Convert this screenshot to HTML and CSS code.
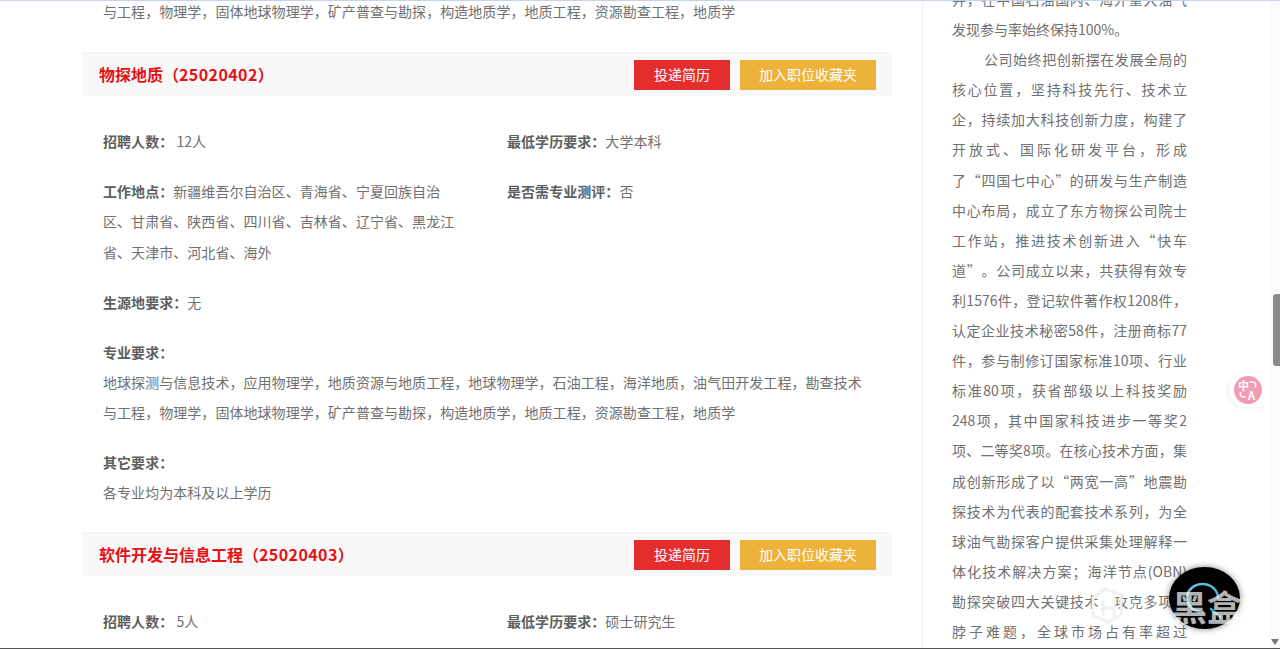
FILE: index.html
```html
<!DOCTYPE html>
<html lang="zh-CN">
  <head>
    <meta charset="UTF-8" />
    <meta name="viewport" content="width=device-width, initial-scale=1.0" />
    <title>招聘职位</title>
    <link rel="stylesheet" href="styles.css">
  </head>
  <body>
    <div class="page">
      <div class="main">
        <p class="tail-text">与工程，物理学，固体地球物理学，矿产普查与勘探，构造地质学，地质工程，资源勘查工程，地质学</p>

        <div class="job-header">
          <h2 class="job-title">物探地质（<span class="job-code">25020402</span>）</h2>
          <div class="job-buttons">
            <a class="btn btn-apply">投递简历</a>
            <a class="btn btn-save">加入职位收藏夹</a>
          </div>
        </div>
        <div class="job-body">
          <div class="field-row">
            <div class="field"><b>招聘人数：</b>&nbsp;12人</div>
            <div class="field"><b>最低学历要求：</b>大学本科</div>
          </div>
          <div class="field-row">
            <div class="field field-wrap"><b>工作地点：</b>新疆维吾尔自治区、青海省、宁夏回族自治区、甘肃省、陕西省、四川省、吉林省、辽宁省、黑龙江省、天津市、河北省、海外</div>
            <div class="field"><b>是否需专业测评：</b>否</div>
          </div>
          <div class="field-row">
            <div class="field"><b>生源地要求：</b>无</div>
          </div>
          <div class="field-block">
            <b>专业要求：</b>
            <p>地球探测与信息技术，应用物理学，地质资源与地质工程，地球物理学，石油工程，海洋地质，油气田开发工程，勘查技术与工程，物理学，固体地球物理学，矿产普查与勘探，构造地质学，地质工程，资源勘查工程，地质学</p>
          </div>
          <div class="field-block">
            <b>其它要求：</b>
            <p>各专业均为本科及以上学历</p>
          </div>
        </div>

        <div class="job-header">
          <h2 class="job-title">软件开发与信息工程（<span class="job-code">25020403</span>）</h2>
          <div class="job-buttons">
            <a class="btn btn-apply">投递简历</a>
            <a class="btn btn-save">加入职位收藏夹</a>
          </div>
        </div>
        <div class="job-body">
          <div class="field-row">
            <div class="field"><b>招聘人数：</b>&nbsp;5人</div>
            <div class="field"><b>最低学历要求：</b>硕士研究生</div>
          </div>
        </div>
      </div>

      <div class="sidebar">
        <p>井，在中国石油国内、海外重大油气发现参与率始终保持100%。</p>
        <p class="indent">公司始终把创新摆在发展全局的核心位置，坚持科技先行、技术立企，持续加大科技创新力度，构建了开放式、国际化研发平台，形成<span class="nobr">了“</span>四国七中心”的研发与生产制造中心布局，成立了东方物探公司院士工作站，推进技术创新进入“快车道”。公司成立以来，共获得有效专利1576件，登记软件著作权1208件，认定企业技术秘密58件，注册商标77件，参与制修订国家标准10项、行业标准80项，获省部级以上科技奖励<span class="nobr">248项，</span>其中国家科技进步一等奖2项、二等奖8项。在核心技术方面，集成创新形成了以“两宽一高”地震勘探技术为代表的配套技术系列，为全球油气勘探客户提供采集处理解释一体化技术解决方案；海洋节点(OBN)<span class="nobr">勘探</span>突破四大关键技术，攻克多项卡脖子难题，全球市场占有率超过</p>
      </div>

      <div class="scroll-track">
        <div class="scroll-thumb"></div>
        <div class="scroll-down"></div>
      </div>

      <div class="translate-tab">
        <div class="translate-icon">
          <span class="zh">中</span>
          <span class="en">A</span>
          <svg class="translate-arcs" width="28" height="28" viewBox="0 0 28 28" fill="none" stroke="#fff" stroke-width="1.6" stroke-linecap="round">
            <path d="M16 6h3a2.5 2.5 0 0 1 2.5 2.5V11" />
            <path d="M6.500 16.500v2a2.500 2.500 0 0 0 2.500 2.500h2" />
          </svg>
        </div>
      </div>

      <div class="box-badge">
        <svg class="box-ring" width="48" height="48" viewBox="0 0 48 48" fill="none" stroke-width="2.5" stroke-linecap="round">
          <defs>
            <linearGradient id="ringColor" x1="0" y1="0" x2="1" y2="1">
              <stop offset="0" stop-color="#6cc4ee" />
              <stop offset="1" stop-color="#3d9ca8" />
            </linearGradient>
          </defs>
          <path d="M38 25a15.500 14 0 1 0-15 14M31 36l9 8" stroke="url(#ringColor)" />
        </svg>
      </div>
      <svg class="wm-logo" width="36" height="38" viewBox="0 0 36 38" fill="none" stroke="#f1f1f1" stroke-width="3">
        <path d="M3 12l12-9 16 6v20l-12 7-16-6zM13 14v16M24 11v20M13 22h11" />
      </svg>
      <div class="watermark"><span class="wm-small">小</span><span class="wm-big">黑盒</span></div>
    </div>
  </body>
</html>
```

FILE: styles.css
```css
* {
  box-sizing: border-box;
}
body {
  margin: 0;
  font-family: "Noto Sans CJK SC", "Open Sans", sans-serif;
  font-size: 14px;
  color: #707070;
  background: #fff;
  text-spacing-trim: space-all;
}
.page {
  position: relative;
  display: flex;
  height: 649px;
  padding-left: 83px;
  overflow: hidden;
  border-top: 1px solid #c5d3f0;
  border-bottom: 1px solid #555;
}
p {
  margin: 0;
}
b {
  color: #5e5e5e;
}

/* job list */
.main {
  flex: none;
  width: 809px;
  margin-top: -5px;
}
.tail-text {
  padding: 0 20px;
  line-height: 30px;
  margin-bottom: 26px;
  letter-spacing: 0.05px;
}
.job-header {
  display: flex;
  justify-content: space-between;
  align-items: center;
  height: 44px;
  padding: 0 16px;
  background: #f8f8f8;
  border-top: 1px solid #f1f1f1;
}
.job-title {
  margin: 0 0 2px;
  font-size: 16px;
  font-weight: 700;
  color: #e60f14;
}
.job-code {
  letter-spacing: 0.4px;
}
.job-buttons {
  display: flex;
  gap: 10px;
}
.btn {
  display: block;
  height: 30px;
  line-height: 28px;
  text-align: center;
  color: #fff;
  cursor: pointer;
}
.btn-apply {
  width: 96px;
  background: #e52d2d;
}
.btn-save {
  width: 136px;
  background: #ecb23a;
}
.job-body {
  padding: 30px 20px 5px;
  letter-spacing: 0.05px;
}
.field-row {
  display: grid;
  grid-template-columns: 404px 1fr;
  margin-bottom: 20px;
  line-height: 30px;
}
.field-wrap {
  width: 352px;
  line-height: 30.34px;
}
.field-block {
  margin-bottom: 20px;
  line-height: 30px;
}

/* article on the right */
.sidebar {
  flex: none;
  width: 265px;
  margin-left: 30px;
  margin-top: -17px;
  padding-left: 29px;
  padding-right: 0;
  border-left: 1px solid #f1f1f1;
  line-height: 30.1px;
  text-align: justify;
}
.indent {
  text-indent: 32px;
  text-align-last: justify;
}
.nobr {
  white-space: nowrap;
}

/* overlays */
.scroll-track {
  position: absolute;
  top: 0;
  right: 0;
  bottom: 0;
  width: 10px;
  background: #fbfbfb;
}
.scroll-thumb {
  position: absolute;
  top: 293px;
  right: 0;
  width: 7px;
  height: 72px;
  border-radius: 3px 0 0 3px;
  background: #8a8a8a;
}
.scroll-down {
  position: absolute;
  right: 0;
  bottom: 3px;
  border: 4px solid transparent;
  border-top: 6px solid #777;
  border-bottom: 0;
  margin-right: 1px;
}
.translate-tab {
  position: absolute;
  top: 372px;
  right: 10px;
  display: flex;
  align-items: center;
  width: 41px;
  height: 34px;
  padding-left: 5px;
  background: #fff;
  border-radius: 17px 0 0 17px;
  box-shadow: -2px 1px 5px rgba(0, 0, 0, 0.06);
}
.translate-icon {
  position: relative;
  width: 28px;
  height: 28px;
  border-radius: 50%;
  background: #f29cb4;
  color: #fff;
}
.zh,
.en {
  position: absolute;
  font-weight: 700;
  line-height: 1;
}
.zh {
  top: 4px;
  left: 4px;
  font-size: 11px;
}
.en {
  top: 14px;
  left: 14px;
  font-size: 11px;
}
.translate-arcs {
  position: absolute;
  top: 0;
  left: 0;
}
.box-badge {
  position: absolute;
  top: 566px;
  left: 1169px;
  width: 71px;
  height: 62px;
  border-radius: 50%;
  background: #000;
  box-shadow: 0 0 6px rgba(0, 0, 0, 0.5);
}
.box-ring {
  position: absolute;
  top: 6px;
  left: 11px;
}
.wm-logo {
  position: absolute;
  top: 585px;
  left: 1090px;
}
.watermark {
  position: absolute;
  top: 582px;
  left: 1126px;
  display: flex;
  align-items: center;
  color: #fff;
  font-weight: 700;
  line-height: 46px;
}
.wm-small {
  width: 46px;
  font-size: 38px;
  opacity: 0.35;
}
.wm-big {
  font-size: 35px;
  opacity: 0.7;
}
```
